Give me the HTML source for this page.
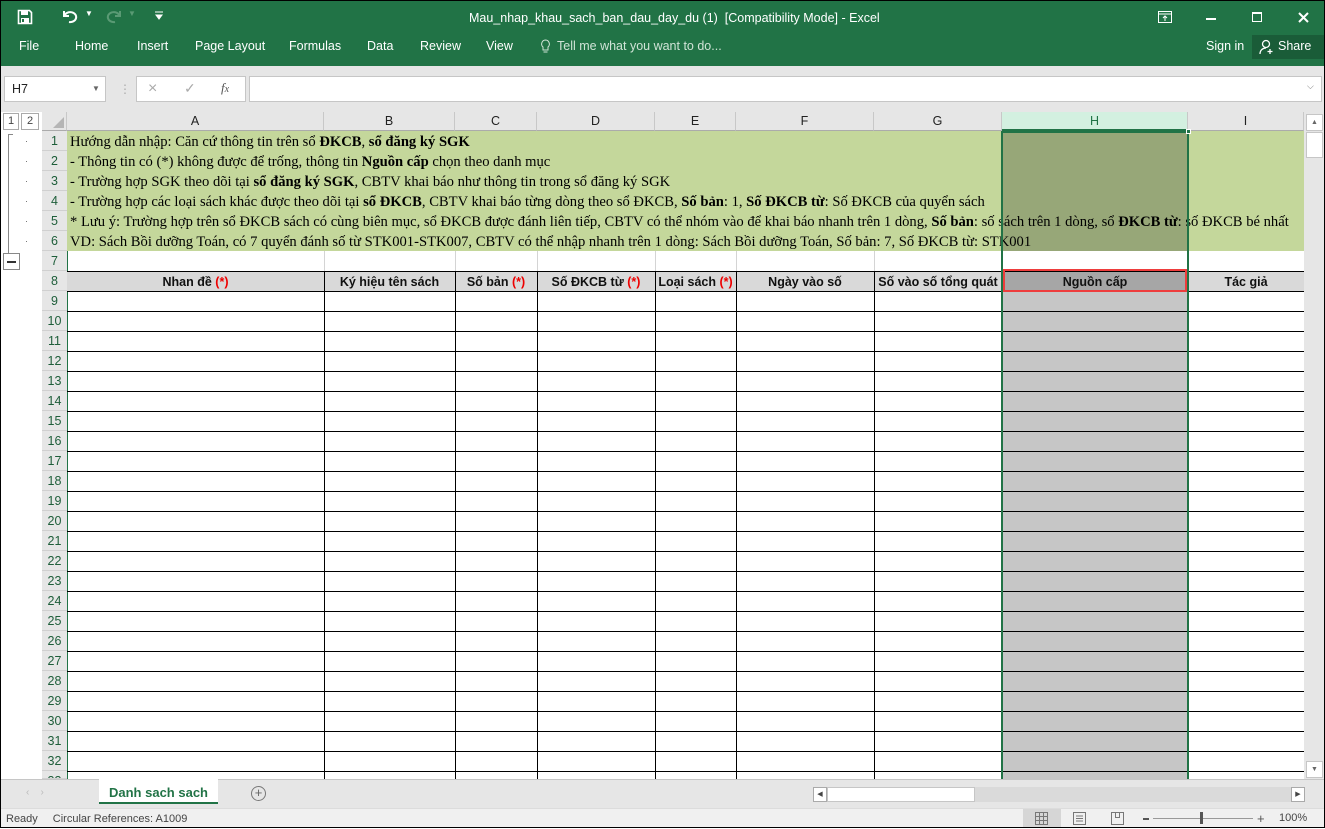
<!DOCTYPE html>
<html><head><meta charset="utf-8"><style>
*{margin:0;padding:0;box-sizing:border-box}
body{width:1325px;height:828px;overflow:hidden;background:#fff;font-family:"Liberation Sans",sans-serif;position:relative}
.a{position:absolute}
.tb{background:#217346;left:0;top:0;width:1325px;height:66px;color:#fff}
.tab{position:absolute;top:39px;font-size:12.5px;color:#fff}
.ch{position:absolute;top:112px;height:19px;background:#e6e6e6;border-right:1px solid #c8c8c8;border-bottom:1px solid #ababab;text-align:center;font-size:12.5px;line-height:19px;color:#222}
.rn{position:absolute;left:42px;width:25px;height:20px;background:#e6e6e6;border-bottom:1px solid #d0d0d0;text-align:center;font-size:12.5px;line-height:20px;color:#1e5e3a}
.g{position:absolute;font-family:"Liberation Serif",serif;font-size:14.6px;left:70px;white-space:nowrap;line-height:20px;color:#000}
.hd{position:absolute;top:273px;height:19px;text-align:center;font-weight:bold;font-size:12.5px;line-height:19px;color:#111;white-space:nowrap;overflow:hidden}
.r{color:#e00}
.vl{position:absolute;top:271px;height:508px;width:1px;background:#000}
</style></head><body>
<div class="a tb"></div>
<div class="a" style="left:0;top:0;width:1325px;height:1px;background:#000"></div>
<svg class="a" style="left:17px;top:9px" width="16" height="16" viewBox="0 0 16 16"><path d="M1.5 1.5h11l2 2v11h-13z" fill="none" stroke="#fff" stroke-width="1.6"/><rect x="4" y="2" width="7" height="4" fill="#fff"/><rect x="4" y="9" width="8" height="5" fill="#fff"/><rect x="5" y="10" width="2" height="3" fill="#217346"/></svg>
<svg class="a" style="left:60px;top:8px" width="20" height="16" viewBox="0 0 20 16"><path d="M4 3v5h5M4.5 7.5A6 5 0 1 1 9 14" fill="none" stroke="#fff" stroke-width="2"/></svg>
<div class="a" style="left:85px;top:9px;color:#fff;font-size:8px">▼</div>
<svg class="a" style="left:104px;top:8px" width="20" height="16" viewBox="0 0 20 16"><path d="M16 3v5h-5M15.5 7.5A6 5 0 1 0 11 14" fill="none" stroke="#5a9a74" stroke-width="2"/></svg>
<div class="a" style="left:128px;top:9px;color:#5a9a74;font-size:8px">▼</div>
<svg class="a" style="left:154px;top:11px" width="10" height="10"><path d="M1 1h8M2 4h6l-3 4z" stroke="#fff" fill="#fff"/></svg>
<div class="a" style="left:469px;top:11px;color:#fff;font-size:12.5px">Mau_nhap_khau_sach_ban_dau_day_du (1)&nbsp; [Compatibility Mode] - Excel</div>
<svg class="a" style="left:1158px;top:11px" width="14" height="12"><rect x=".5" y=".5" width="13" height="11" fill="none" stroke="#fff"/><path d="M1 3h12M7 10V5M5 7l2-2 2 2" stroke="#fff" fill="none"/></svg>
<div class="a" style="left:1206px;top:18px;width:10px;height:2px;background:#fff"></div>
<div class="a" style="left:1252px;top:12px;width:10px;height:10px;border:1px solid #fff;border-top-width:2px"></div>
<svg class="a" style="left:1298px;top:12px" width="11" height="11"><path d="M1 1l9 9M10 1l-9 9" stroke="#fff" stroke-width="2"/></svg>
<div class="tab" style="left:19px">File</div>
<div class="tab" style="left:75px">Home</div>
<div class="tab" style="left:137px">Insert</div>
<div class="tab" style="left:195px">Page Layout</div>
<div class="tab" style="left:289px">Formulas</div>
<div class="tab" style="left:367px">Data</div>
<div class="tab" style="left:420px">Review</div>
<div class="tab" style="left:486px">View</div>
<svg class="a" style="left:540px;top:39px" width="11" height="15"><path d="M5.5 1a4 4 0 0 0-2.5 7v3h5V8a4 4 0 0 0-2.5-7zM3.5 13h4" stroke="#cfe3d6" fill="none"/></svg>
<div class="tab" style="left:557px;color:#cfe3d6">Tell me what you want to do...</div>
<div class="tab" style="left:1206px">Sign in</div>
<div class="a" style="left:1252px;top:35px;width:72px;height:24px;background:#1a5c38"></div>
<svg class="a" style="left:1259px;top:39px" width="16" height="16"><circle cx="7" cy="5" r="3.5" fill="none" stroke="#fff" stroke-width="1.3"/><path d="M1 15c0-4 3-6 6-6M11 10v5M8.5 12.5h5" stroke="#fff" stroke-width="1.3" fill="none"/></svg>
<div class="tab" style="left:1278px">Share</div>
<div class="a" style="left:0;top:66px;width:1325px;height:46px;background:#e6e6e6"></div>
<div class="a" style="left:4px;top:76px;width:102px;height:26px;background:#fff;border:1px solid #c6c6c6;font-size:12.5px;line-height:24px;padding-left:7px;color:#222">H7<span style="position:absolute;left:87px;top:0;font-size:8px;color:#666">▼</span></div>
<div class="a" style="left:119px;top:82px;color:#aaa;font-size:12px">⋮</div>
<div class="a" style="left:136px;top:76px;width:110px;height:26px;background:#fff;border:1px solid #c6c6c6"></div>
<div class="a" style="left:148px;top:80px;color:#aaa;font-size:16px">×</div>
<div class="a" style="left:184px;top:80px;color:#aaa;font-size:14px">✓</div>
<div class="a" style="left:221px;top:80px;color:#555;font-size:13px;font-style:italic;font-family:'Liberation Serif',serif">f<span style="font-size:10px">x</span></div>
<div class="a" style="left:249px;top:76px;width:1073px;height:26px;background:#fff;border:1px solid #c6c6c6"></div>
<div class="a" style="left:1307px;top:81px;color:#777;font-size:9px">⌵</div>
<div class="a" style="left:0;top:112px;width:42px;height:667px;background:#fff"></div>
<div class="a" style="left:3px;top:113px;width:16px;height:17px;border:1px solid #aaa;font-size:11px;text-align:center;line-height:15px;color:#444">1</div>
<div class="a" style="left:21px;top:113px;width:18px;height:17px;border:1px solid #aaa;font-size:11px;text-align:center;line-height:15px;color:#444">2</div>
<div class="a" style="left:8px;top:134px;width:5px;height:120px;border-left:1px solid #888;border-top:1px solid #888"></div>
<div class="a" style="left:3px;top:253px;width:17px;height:17px;border:1px solid #888;background:#fff"></div>
<div class="a" style="left:7px;top:261px;width:9px;height:1.5px;background:#333"></div>
<div class="a" style="left:26px;top:141px;width:1px;height:1px;background:#777;box-shadow:0 20px #777,0 40px #777,0 60px #777,0 80px #777,0 100px #777"></div>
<div class="a" style="left:42px;top:112px;width:25px;height:19px;background:#e6e6e6;border-right:1px solid #c8c8c8;border-bottom:1px solid #ababab"></div>
<div class="a" style="left:53px;top:117px;width:0;height:0;border-left:11px solid transparent;border-bottom:11px solid #b5b5b5"></div>
<div class="ch" style="left:67px;width:257px">A</div>
<div class="ch" style="left:324px;width:131px">B</div>
<div class="ch" style="left:455px;width:82px">C</div>
<div class="ch" style="left:537px;width:118px">D</div>
<div class="ch" style="left:655px;width:81px">E</div>
<div class="ch" style="left:736px;width:138px">F</div>
<div class="ch" style="left:874px;width:128px">G</div>
<div class="ch" style="left:1002px;width:186px;background:#d3f0e0;color:#217346;border-bottom:2px solid #217346">H</div>
<div class="ch" style="left:1188px;width:116px">I</div>
<div class="rn" style="top:131px">1</div><div class="rn" style="top:151px">2</div><div class="rn" style="top:171px">3</div><div class="rn" style="top:191px">4</div><div class="rn" style="top:211px">5</div><div class="rn" style="top:231px">6</div><div class="rn" style="top:251px">7</div><div class="rn" style="top:271px">8</div><div class="rn" style="top:291px">9</div><div class="rn" style="top:311px">10</div><div class="rn" style="top:331px">11</div><div class="rn" style="top:351px">12</div><div class="rn" style="top:371px">13</div><div class="rn" style="top:391px">14</div><div class="rn" style="top:411px">15</div><div class="rn" style="top:431px">16</div><div class="rn" style="top:451px">17</div><div class="rn" style="top:471px">18</div><div class="rn" style="top:491px">19</div><div class="rn" style="top:511px">20</div><div class="rn" style="top:531px">21</div><div class="rn" style="top:551px">22</div><div class="rn" style="top:571px">23</div><div class="rn" style="top:591px">24</div><div class="rn" style="top:611px">25</div><div class="rn" style="top:631px">26</div><div class="rn" style="top:651px">27</div><div class="rn" style="top:671px">28</div><div class="rn" style="top:691px">29</div><div class="rn" style="top:711px">30</div><div class="rn" style="top:731px">31</div><div class="rn" style="top:751px">32</div><div class="rn" style="top:771px;height:8px;overflow:hidden">33</div>
<div class="a" style="left:67px;top:131px;width:1px;height:648px;background:#217346"></div>
<div class="a" style="left:67px;top:131px;width:1237px;height:120px;background:#c4d79b"></div>
<div class="a" style="left:1003px;top:132px;width:185px;height:119px;background:#97a778"></div>
<div class="a" style="left:324px;top:251px;width:1px;height:20px;background:#d4d4d4;box-shadow:131px 0 #d4d4d4,213px 0 #d4d4d4,331px 0 #d4d4d4,412px 0 #d4d4d4,550px 0 #d4d4d4,864px 0 #d4d4d4"></div>
<div class="g" style="top:132px">Hướng dẫn nhập: Căn cứ thông tin trên sổ <b>ĐKCB</b>, <b>sổ đăng ký SGK</b></div>
<div class="g" style="top:152px">- Thông tin có (*) không được để trống, thông tin <b>Nguồn cấp</b> chọn theo danh mục</div>
<div class="g" style="top:172px">- Trường hợp SGK theo dõi tại <b>sổ đăng ký SGK</b>, CBTV khai báo như thông tin trong sổ đăng ký SGK</div>
<div class="g" style="top:192px;width:932px;overflow:hidden">- Trường hợp các loại sách khác được theo dõi tại <b>sổ ĐKCB</b>, CBTV khai báo từng dòng theo sổ ĐKCB, <b>Số bản</b>: 1, <b>Số ĐKCB từ</b>: Số ĐKCB của quyển sách</div>
<div class="g" style="top:212px;width:1234px;overflow:hidden">* Lưu ý: Trường hợp trên sổ ĐKCB sách có cùng biên mục, sổ ĐKCB được đánh liên tiếp, CBTV có thể nhóm vào để khai báo nhanh trên 1 dòng, <b>Số bản</b>: số sách trên 1 dòng, sổ <b>ĐKCB từ</b>: số ĐKCB bé nhất</div>
<div class="g" style="top:232px">VD: Sách Bồi dưỡng Toán, có 7 quyển đánh số từ STK001-STK007, CBTV có thể nhập nhanh trên 1 dòng: Sách Bồi dưỡng Toán, Số bản: 7, Số ĐKCB từ: STK001</div>
<div class="a" style="left:67px;top:271px;width:1237px;height:20px;background:#d9d9d9"></div>
<div class="a" style="left:1003px;top:291px;width:185px;height:488px;background:#c6c6c6"></div>
<div class="a" style="left:67px;top:271px;width:1237px;height:508px;background:repeating-linear-gradient(180deg,#000 0,#000 1px,transparent 1px,transparent 20px)"></div>
<div class="vl" style="left:324px"></div><div class="vl" style="left:455px"></div><div class="vl" style="left:537px"></div><div class="vl" style="left:655px"></div><div class="vl" style="left:736px"></div><div class="vl" style="left:874px"></div><div class="vl" style="left:1002px"></div><div class="vl" style="left:1188px"></div>
<div class="a" style="left:1003px;top:272px;width:185px;height:19px;background:#a6a6a6"></div>
<div class="hd" style="left:67px;width:257px">Nhan đề <span class="r">(*)</span></div>
<div class="hd" style="left:324px;width:131px">Ký hiệu tên sách</div>
<div class="hd" style="left:455px;width:82px">Số bản <span class="r">(*)</span></div>
<div class="hd" style="left:537px;width:118px">Số ĐKCB từ <span class="r">(*)</span></div>
<div class="hd" style="left:655px;width:81px">Loại sách <span class="r">(*)</span></div>
<div class="hd" style="left:736px;width:138px">Ngày vào số</div>
<div class="hd" style="left:874px;width:128px">Số vào số tổng quát</div>
<div class="hd" style="left:1002px;width:186px">Nguồn cấp</div>
<div class="hd" style="left:1188px;width:116px">Tác giả</div>
<div class="a" style="left:1003px;top:269px;width:184px;height:23px;border:2px solid #ee3d3d"></div>
<div class="a" style="left:1001px;top:131px;width:188px;height:648px;border:2px solid #217346;border-bottom:none"></div>
<div class="a" style="left:1186px;top:129px;width:5px;height:5px;background:#217346;border:1px solid #fff"></div>
<div class="a" style="left:1304px;top:112px;width:21px;height:667px;background:#e6e6e6"></div>
<div class="a" style="left:1306px;top:114px;width:17px;height:17px;background:#fff;border:1px solid #c6c6c6;font-size:7px;text-align:center;line-height:15px;color:#666">▲</div>
<div class="a" style="left:1306px;top:132px;width:17px;height:26px;background:#fff;border:1px solid #c6c6c6"></div>
<div class="a" style="left:1306px;top:761px;width:17px;height:17px;background:#fff;border:1px solid #c6c6c6;font-size:7px;text-align:center;line-height:15px;color:#666">▼</div>
<div class="a" style="left:0;top:779px;width:1325px;height:29px;background:#e6e6e6;border-top:1px solid #c6c6c6"></div>
<div class="a" style="left:26px;top:787px;color:#bbb;font-size:10px">&#x2039;&nbsp;&nbsp;&nbsp;&nbsp;&#x203A;</div>
<div class="a" style="left:99px;top:779px;width:119px;height:25px;background:#fff;border-bottom:2px solid #217346;color:#217346;font-weight:bold;font-size:13px;text-align:center;line-height:27px">Danh sach sach</div>
<div class="a" style="left:251px;top:786px;width:15px;height:15px;border:1px solid #777;border-radius:50%;text-align:center;font-size:13px;line-height:12px;color:#666">+</div>
<div class="a" style="left:813px;top:787px;width:492px;height:15px;background:#dadada"></div>
<div class="a" style="left:813px;top:787px;width:14px;height:15px;background:#fff;border:1px solid #aaa;font-size:7px;line-height:13px;text-align:center;color:#444">◀</div>
<div class="a" style="left:827px;top:787px;width:148px;height:15px;background:#fff;border:1px solid #c6c6c6"></div>
<div class="a" style="left:1291px;top:787px;width:14px;height:15px;background:#fff;border:1px solid #aaa;font-size:7px;line-height:13px;text-align:center;color:#444">▶</div>
<div class="a" style="left:0;top:808px;width:1325px;height:20px;background:#f0f0f0;border-top:1px solid #dcdcdc;font-size:11px;color:#444;line-height:20px"><span style="margin-left:6px">Ready</span><span style="margin-left:15px">Circular References: A1009</span></div>
<div class="a" style="left:1023px;top:809px;width:38px;height:19px;background:#d6d6d6"></div>
<svg class="a" style="left:1035px;top:812px" width="13" height="13"><path d="M.5 .5h12v12H.5zM4.5 0v13M8.5 0v13M0 4.5h13M0 8.5h13" stroke="#777" fill="none"/></svg>
<svg class="a" style="left:1073px;top:812px" width="13" height="13"><path d="M.5 .5h12v12H.5zM3 4h7M3 6.5h7M3 9h7" stroke="#777" fill="none"/></svg>
<svg class="a" style="left:1111px;top:812px" width="13" height="13"><path d="M.5 .5h12v12H.5zM4.5 .5v5h4v-5" stroke="#777" fill="none"/></svg>
<div class="a" style="left:1143px;top:818px;width:6px;height:2px;background:#555"></div>
<div class="a" style="left:1153px;top:818px;width:100px;height:1px;background:#999"></div>
<div class="a" style="left:1200px;top:812px;width:3px;height:12px;background:#555"></div>
<div class="a" style="left:1257px;top:812px;color:#555;font-size:13px;line-height:13px">+</div>
<div class="a" style="left:1279px;top:812px;color:#444;font-size:11px">100%</div>
<div class="a" style="left:0;top:0;width:1px;height:828px;background:#000"></div>
<div class="a" style="left:1324px;top:0;width:1px;height:828px;background:#000"></div>
<div class="a" style="left:0;top:827px;width:1325px;height:1px;background:#000"></div>
</body></html>
